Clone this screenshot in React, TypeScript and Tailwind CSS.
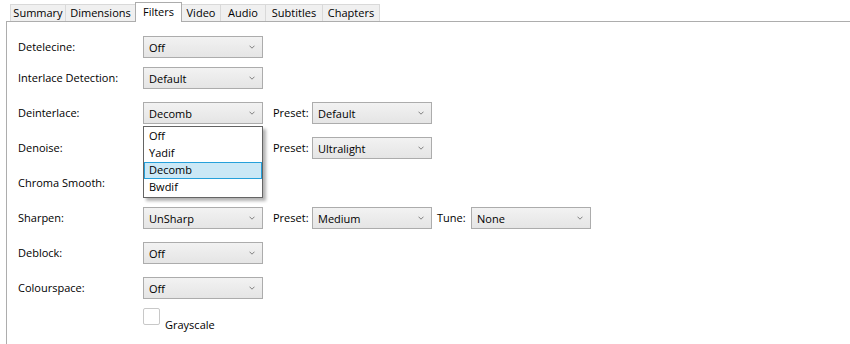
const font = { fontFamily: '"Open Sans", "Noto Sans", sans-serif' };

const tabs = [
  { name: "Summary", w: "w-[56px]" },
  { name: "Dimensions", w: "w-[71px]" },
  { name: "Filters", w: "w-[47px]" },
  { name: "Video", w: "w-[40px]" },
  { name: "Audio", w: "w-[46px]" },
  { name: "Subtitles", w: "w-[58px]" },
  { name: "Chapters", w: "w-[58px]" },
];

const Chevron = () => (
  <svg width="6" height="4" viewBox="0 0 6 4" className="shrink-0">
    <path d="M0.5 0.7 L3 3.2 L5.5 0.7" fill="none" stroke="#808080" strokeWidth="1" />
  </svg>
);

// value may be empty where the open list hides the box
const Combo = ({ value }: { value?: string }) => (
  <div className="flex h-[22px] w-[120px] shrink-0 items-center justify-between border border-[#acacac] bg-gradient-to-b from-[#f2f2f2] to-[#e5e5e5] pl-[5px] pr-[7px]">
    <span className="leading-none">{value}</span>
    <Chevron />
  </div>
);

const Label = ({ text, w }: { text: string; w: string }) => (
  <div className={`${w} shrink-0`}>{text}</div>
);

const Row = ({ label, children, mt }: { label: string; children?: React.ReactNode; mt: string }) => (
  <div className={`flex h-[22px] items-center ${mt}`}>
    <div className="w-[125px] shrink-0">{label}</div>
    {children}
  </div>
);

export default function App() {
  return (
    <div className="h-[344px] w-[850px] overflow-hidden bg-white text-[11px] text-black" style={font}>
      <div className="flex h-[21px] items-end pl-[10px]">
        {tabs.map((t, i) =>
          t.name === "Filters" ? (
            <div
              key={t.name}
              className={`relative z-10 -mb-[1px] -ml-[1px] flex h-[20px] items-center justify-center border border-b-0 border-[#acacac] bg-white pb-[1px] ${t.w}`}
            >
              {t.name}
            </div>
          ) : (
            <div
              key={t.name}
              className={`flex h-[17px] items-center justify-center border border-b-0 border-[#d9d9d9] bg-[#f0f0f0] ${t.w} ${
                i === 0 ? "" : "-ml-[1px]"
              }`}
            >
              {t.name}
            </div>
          )
        )}
      </div>
      <div className="relative ml-[6px] h-[400px] border-l border-t border-[#adadad] pl-[11px]">
        <Row label="Detelecine:" mt="mt-[14px]">
          <Combo value="Off" />
        </Row>
        <Row label="Interlace Detection:" mt="mt-[9px]">
          <Combo value="Default" />
        </Row>
        <Row label="Deinterlace:" mt="mt-[13px]">
          <Combo value="Decomb" />
          <div className="ml-[10px] flex items-center">
            <Label text="Preset:" w="w-[39px]" />
            <Combo value="Default" />
          </div>
        </Row>
        <Row label="Denoise:" mt="mt-[13px]">
          <Combo />
          <div className="ml-[10px] flex items-center">
            <Label text="Preset:" w="w-[39px]" />
            <Combo value="Ultralight" />
          </div>
        </Row>
        <Row label="Chroma Smooth:" mt="mt-[13px]">
          <Combo />
        </Row>
        <Row label="Sharpen:" mt="mt-[13px]">
          <Combo value="UnSharp" />
          <div className="ml-[10px] flex items-center">
            <Label text="Preset:" w="w-[39px]" />
            <Combo value="Medium" />
          </div>
          <div className="ml-[5px] flex items-center">
            <Label text="Tune:" w="w-[34px]" />
            <Combo value="None" />
          </div>
        </Row>
        <Row label="Deblock:" mt="mt-[13px]">
          <Combo value="Off" />
        </Row>
        <Row label="Colourspace:" mt="mt-[13px]">
          <Combo value="Off" />
        </Row>
        <div className="mt-[9px] flex items-end pl-[125px]">
          <div className="h-[17px] w-[17px] rounded-[2px] border border-[#c8c8c8] bg-white" />
          <span className="ml-[5px] translate-y-[5px] leading-none">Grayscale</span>
        </div>

        <div className="absolute left-[136px] top-[104px] z-20 w-[120px] border border-[#646464] bg-white py-px shadow-[3px_3px_3px_rgba(0,0,0,0.3)]">
          {["Off", "Yadif", "Decomb", "Bwdif"].map((o) => (
            <div
              key={o}
              className={`flex h-[17px] items-center ${
                o === "Decomb" ? "border border-[#26a0da] bg-[#cbe8f6] pl-[4px]" : "pl-[5px]"
              }`}
            >
              {o}
            </div>
          ))}
        </div>
      </div>
    </div>
  );
}
